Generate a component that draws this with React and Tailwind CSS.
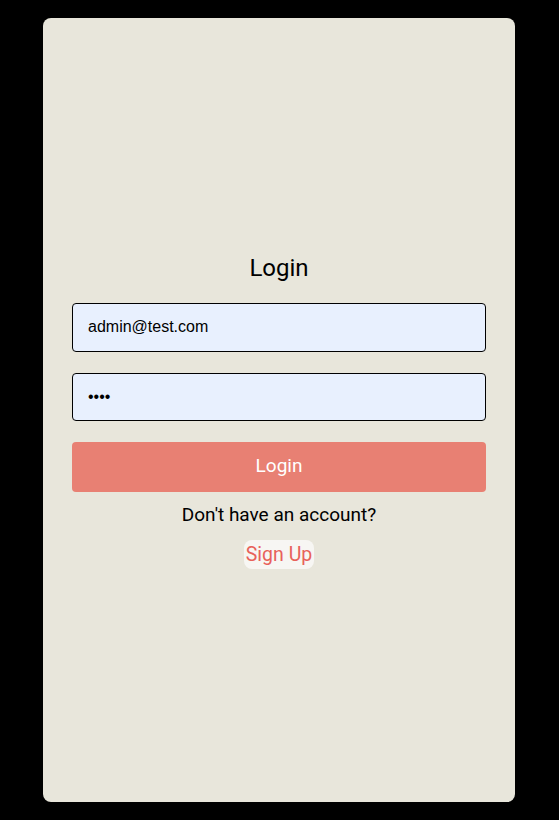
export default function App() {
  return (
    <div className="min-h-[820px] w-full bg-black py-[18px]" style={{ fontFamily: 'Roboto, "Liberation Sans", sans-serif' }}>
      <div className="ml-[43px] flex h-[784px] w-[472px] flex-col justify-center rounded-lg bg-[#e8e6db] px-[29px]">
        <h1 className="text-center text-[24px] leading-[32px] text-black">Login</h1>
        <input
          readOnly
          value="admin@test.com"
          className="mt-[19px] h-[49px] w-full rounded border border-black bg-[#e8f0fe] px-[15px] text-[16px] text-black outline-none"
          style={{ fontFamily: '"Liberation Sans", Arial, sans-serif' }}
        />
        <input
          readOnly
          type="password"
          value="1234"
          className="mt-[21px] h-[48px] w-full rounded border border-black bg-[#e8f0fe] px-[15px] text-[16px] text-black outline-none"
          style={{ fontFamily: '"Liberation Sans", Arial, sans-serif' }}
        />
        <button className="mt-[21px] h-[50px] w-full rounded bg-[#e88073] text-[19px] text-white">Login</button>
        <p className="mt-[11px] text-center text-[19px] leading-[24px] text-black">Don't have an account?</p>
        <div className="mt-[13px] flex justify-center">
          <button className="h-[29px] rounded-lg bg-[#f7f6f3] px-[2px] text-[19.5px] leading-[29px] text-[#e8625a]">Sign Up</button>
        </div>
      </div>
    </div>
  );
}
